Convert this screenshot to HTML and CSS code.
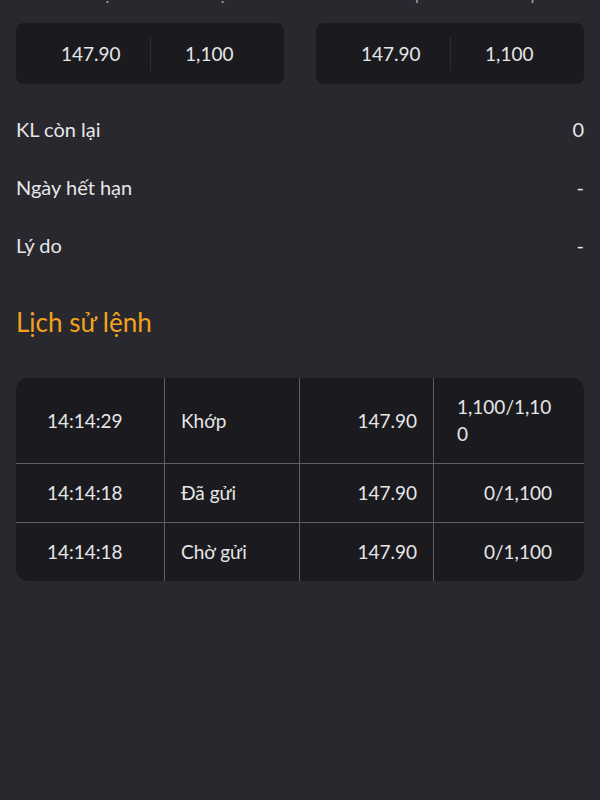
FILE: index.html
```html
<!DOCTYPE html>
<html lang="vi">
<head>
    <meta charset="UTF-8">
    <meta name="viewport" content="width=device-width, initial-scale=1.0">
    <title>Chi tiết lệnh</title>
    <link rel="stylesheet" href="styles.css">
</head>
<body>

    <div class="page">
        <div class="summary">
            <div class="panel">
                <div class="labels">
                    <span>Giá đặt</span>
                    <span>KL đặt</span>
                </div>
                <div class="box">
                    <span class="cell">147.90</span>
                    <span class="sep"></span>
                    <span class="cell">1,100</span>
                </div>
            </div>
            <div class="panel">
                <div class="labels">
                    <span>Giá khớp</span>
                    <span>KL khớp</span>
                </div>
                <div class="box">
                    <span class="cell">147.90</span>
                    <span class="sep"></span>
                    <span class="cell">1,100</span>
                </div>
            </div>
        </div>

        <div class="info">
            <div class="info-row"><span>KL còn lại</span><span>0</span></div>
            <div class="info-row"><span>Ngày hết hạn</span><span>-</span></div>
            <div class="info-row"><span>Lý do</span><span>-</span></div>
        </div>

        <h3 class="title">Lịch sử lệnh</h3>

        <table class="history">
            <colgroup>
                <col class="c-time">
                <col class="c-status">
                <col class="c-price">
                <col class="c-qty">
            </colgroup>
            <tr>
                <td class="time">14:14:29</td>
                <td class="status">Khớp</td>
                <td class="price">147.90</td>
                <td class="qty"><span>1,100/1,100</span></td>
            </tr>
            <tr>
                <td class="time">14:14:18</td>
                <td class="status">Đã gửi</td>
                <td class="price">147.90</td>
                <td class="qty"><span>0/1,100</span></td>
            </tr>
            <tr>
                <td class="time">14:14:18</td>
                <td class="status">Chờ gửi</td>
                <td class="price">147.90</td>
                <td class="qty"><span>0/1,100</span></td>
            </tr>
        </table>
    </div>

</body>
</html>
```

FILE: styles.css
```css
body {
    margin: 0;
    padding: 0;
    background-color: #28282e;
    color: #e6e6e8;
    font-family: Lato, "Noto Sans", sans-serif;
    font-size: 20px;
    overflow: hidden;
}

.page {
    padding: 0 16px;
}

.summary {
    display: grid;
    grid-template-columns: 1fr 1fr;
    gap: 32px;
    margin-top: -18px;
}

.labels {
    display: flex;
    height: 24px;
    line-height: 24px;
    margin-bottom: 17px;
    padding: 0 16px;
    color: #a0a0a6;
    font-size: 17px;
}

.labels span {
    flex: 1;
    text-align: center;
}

.box {
    display: flex;
    align-items: center;
    height: 61px;
    padding: 0 16px;
    background: #1b1b1f;
    border-radius: 8px;
    font-size: 19px;
}

.box .cell {
    flex: 1;
    text-align: center;
}

.box .sep {
    width: 1px;
    height: 34px;
    background: #2c2c31;
}

.info {
    margin-top: 16px;
}

.info-row {
    display: flex;
    justify-content: space-between;
    align-items: center;
    height: 58px;
}

.title {
    margin: 32px 0 40px;
    line-height: 32px;
    font-size: 26px;
    font-weight: normal;
    color: #f2a21e;
}

.history {
    width: 100%;
    table-layout: fixed;
    border-collapse: separate;
    border-spacing: 0;
    background: #1b1b1f;
    border-radius: 12px;
    overflow: hidden;
    font-size: 19px;
}

.c-time { width: 149px; }
.c-status { width: 135px; }
.c-price { width: 134px; }
.c-qty { width: 150px; }

.history td {
    padding: 15px 16px 16px;
    line-height: 27px;
    border-right: 1px solid #5e5e63;
    vertical-align: middle;
}

.history td:last-child {
    border-right: none;
}

.history tr + tr td {
    border-top: 1px solid #5e5e63;
}

.history .time {
    padding-left: 31px;
}

.history .price {
    text-align: right;
}

.history .qty {
    padding-left: 23px;
    padding-right: 32px;
    text-align: right;
}

.history .qty span {
    display: inline-block;
    text-align: left;
    word-break: break-all;
}
```
